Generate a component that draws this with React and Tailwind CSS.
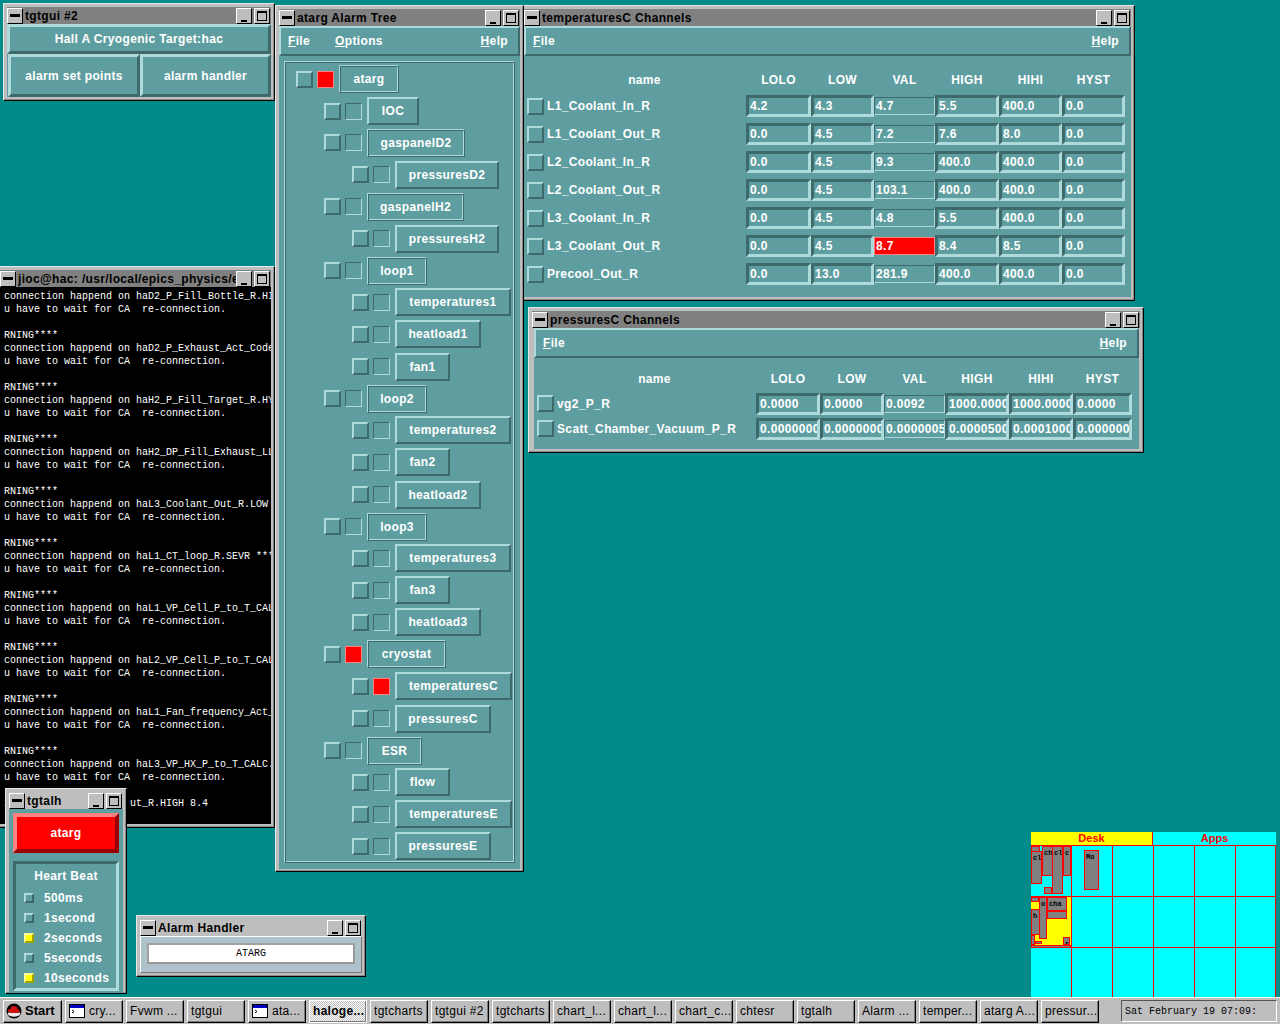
import React from 'react';

const raised = 'border-2 border-t-[#afdadc] border-l-[#afdadc] border-r-[#3f6a6b] border-b-[#3f6a6b]';
const sunken = 'border-[3px] border-t-[#3f6a6b] border-l-[#3f6a6b] border-r-[#afdadc] border-b-[#afdadc]';
const thin = 'border border-t-[#3f6a6b] border-l-[#3f6a6b] border-r-[#afdadc] border-b-[#afdadc]';
const etched = 'border border-t-[#afdadc] border-l-[#afdadc] border-r-[#3f6a6b] border-b-[#3f6a6b] shadow-[inset_1px_1px_0_#3f6a6b,inset_-1px_-1px_0_#afdadc]';
const sans = "font-['Liberation_Sans',sans-serif]";
const mono = "font-['Liberation_Mono',monospace]";
const label = `${sans} text-[12px] font-bold text-white tracking-[0.35px] whitespace-nowrap`;

const TitleBtn = ({ children }) => (
  <div className="w-[16px] h-[16px] bg-[#bebebe] border border-t-white border-l-white border-r-black border-b-black flex items-center justify-center shrink-0 relative">
    {children}
  </div>
);

const Window = ({ pos, title, titleBg = 'bg-[#808080]', children }) => (
  <div className={`absolute ${pos} bg-[#bebebe] border border-t-[#e8e8e8] border-l-[#e8e8e8] border-r-black border-b-black shadow-[inset_-1px_-1px_0_#8a8a8a] p-[3px] flex flex-col overflow-hidden`}>
    <div className={`h-[17px] ${titleBg} flex items-center shrink-0 pr-[1px]`}>
      <TitleBtn><div className="w-[10px] h-[3px] bg-black" /></TitleBtn>
      <span className={`${sans} text-[12px] font-bold text-black tracking-[0.35px] ml-[2px] flex-1 whitespace-nowrap overflow-hidden`}>{title}</span>
      <div className="flex gap-[2px]">
        <TitleBtn><div className="absolute left-[4px] bottom-[1px] w-[6px] h-[2px] bg-black" /></TitleBtn>
        <TitleBtn><div className="w-[10px] h-[10px] border border-black border-t-2" /></TitleBtn>
      </div>
    </div>
    {children}
  </div>
);

const MenuBar = ({ left, help = true, className = '' }) => (
  <div className={`h-[30px] shrink-0 ${raised} flex items-center px-[7px] gap-[25px] ${label} ${className}`}>
    {left.map((m) => (
      <span key={m}>
        <span className="underline">{m[0]}</span>{m.slice(1)}
      </span>
    ))}
    {help && (
      <span className="ml-auto mr-[3px]"><span className="underline">H</span>elp</span>
    )}
  </div>
);

const GuiBtn = ({ className, children }) => (
  <div className={`${className} border-[3px] border-t-[#afdadc] border-l-[#afdadc] border-r-[#3f6a6b] border-b-[#3f6a6b] flex items-center justify-center ${label}`}>
    {children}
  </div>
);

const treeRows = [
  { level: 'pl-[10px]', name: 'atarg', w: 'w-[60px]', parent: true, alarm: true, h: 'h-[32px]' },
  { level: 'pl-[38px]', name: 'IOC', w: 'w-[52px]', h: 'h-[32px]' },
  { level: 'pl-[38px]', name: 'gaspanelD2', w: 'w-[98px]', parent: true, h: 'h-[31px]' },
  { level: 'pl-[66px]', name: 'pressuresD2', w: 'w-[104px]', h: 'h-[33px]' },
  { level: 'pl-[38px]', name: 'gaspanelH2', w: 'w-[97px]', parent: true, h: 'h-[31px]' },
  { level: 'pl-[66px]', name: 'pressuresH2', w: 'w-[104px]', h: 'h-[33px]' },
  { level: 'pl-[38px]', name: 'loop1', w: 'w-[60px]', parent: true, h: 'h-[31px]' },
  { level: 'pl-[66px]', name: 'temperatures1', w: 'w-[116px]', h: 'h-[32px]' },
  { level: 'pl-[66px]', name: 'heatload1', w: 'w-[86px]', h: 'h-[32px]' },
  { level: 'pl-[66px]', name: 'fan1', w: 'w-[55px]', h: 'h-[33px]' },
  { level: 'pl-[38px]', name: 'loop2', w: 'w-[60px]', parent: true, h: 'h-[31px]' },
  { level: 'pl-[66px]', name: 'temperatures2', w: 'w-[116px]', h: 'h-[32px]' },
  { level: 'pl-[66px]', name: 'fan2', w: 'w-[55px]', h: 'h-[32px]' },
  { level: 'pl-[66px]', name: 'heatload2', w: 'w-[86px]', h: 'h-[33px]' },
  { level: 'pl-[38px]', name: 'loop3', w: 'w-[60px]', parent: true, h: 'h-[31px]' },
  { level: 'pl-[66px]', name: 'temperatures3', w: 'w-[116px]', h: 'h-[32px]' },
  { level: 'pl-[66px]', name: 'fan3', w: 'w-[55px]', h: 'h-[32px]' },
  { level: 'pl-[66px]', name: 'heatload3', w: 'w-[86px]', h: 'h-[32px]' },
  { level: 'pl-[38px]', name: 'cryostat', w: 'w-[79px]', parent: true, alarm: true, h: 'h-[32px]' },
  { level: 'pl-[66px]', name: 'temperaturesC', w: 'w-[117px]', alarm: true, h: 'h-[32px]' },
  { level: 'pl-[66px]', name: 'pressuresC', w: 'w-[96px]', h: 'h-[33px]' },
  { level: 'pl-[38px]', name: 'ESR', w: 'w-[55px]', parent: true, h: 'h-[31px]' },
  { level: 'pl-[66px]', name: 'flow', w: 'w-[55px]', h: 'h-[32px]' },
  { level: 'pl-[66px]', name: 'temperaturesE', w: 'w-[117px]', h: 'h-[32px]' },
  { level: 'pl-[66px]', name: 'pressuresE', w: 'w-[96px]', h: 'h-[32px]' },
];

const Check = () => <div className={`w-[17px] h-[17px] shrink-0 ${raised}`} />;

const TreeRow = ({ row }) => (
  <div className={`flex items-center ${row.h} ${row.level}`}>
    <Check />
    <div className={`w-[17px] h-[17px] ml-[4px] shrink-0 ${row.alarm ? 'bg-[#ff0000] border border-t-[#ff8080] border-l-[#ff8080] border-r-[#ff8080] border-b-[#ff8080]' : thin}`} />
    <div className={`${row.w} h-[28px] ml-[5px] shrink-0 flex items-center justify-center ${label} ${row.parent ? etched : raised}`}>
      {row.name}
    </div>
  </div>
);

const Field = ({ children }) => (
  <div className={`h-[22px] ${sunken} overflow-hidden flex items-center pl-[1px] ${label} tracking-[0.5px] leading-none`}>
    {children}
  </div>
);

const ValField = ({ alarm, children }) => (
  <div className={`h-[18px] overflow-hidden flex items-center pl-[1px] ${label} tracking-[0.5px] ${alarm ? 'bg-[#ff0000] border border-[#ff8080]' : thin}`}>
    {children}
  </div>
);

const heads = ['LOLO', 'LOW', 'VAL', 'HIGH', 'HIHI', 'HYST'];

const tempRows = [
  ['L1_Coolant_In_R', '4.2', '4.3', '4.7', '5.5', '400.0', '0.0'],
  ['L1_Coolant_Out_R', '0.0', '4.5', '7.2', '7.6', '8.0', '0.0'],
  ['L2_Coolant_In_R', '0.0', '4.5', '9.3', '400.0', '400.0', '0.0'],
  ['L2_Coolant_Out_R', '0.0', '4.5', '103.1', '400.0', '400.0', '0.0'],
  ['L3_Coolant_In_R', '0.0', '4.5', '4.8', '5.5', '400.0', '0.0'],
  ['L3_Coolant_Out_R', '0.0', '4.5', '8.7', '8.4', '8.5', '0.0'],
  ['Precool_Out_R', '0.0', '13.0', '281.9', '400.0', '400.0', '0.0'],
];

const pressRows = [
  ['vg2_P_R', '0.0000', '0.0000', '0.0092', '1000.0000', '1000.0000', '0.0000'],
  ['Scatt_Chamber_Vacuum_P_R', '0.0000000', '0.0000000', '0.0000005', '0.0000500', '0.0001000', '0.000000'],
];

const ChannelRow = ({ row, cols, h, gap }) => (
  <div className={`grid ${cols} items-center ${h}`}>
    <div className={`flex items-center ${gap}`}>
      <Check />
      <span className={label}>{row[0]}</span>
    </div>
    {row.slice(1).map((v, i) =>
      i === 2 ? (
        <ValField key={i} alarm={v === '8.7'}>{v}</ValField>
      ) : (
        <Field key={i}>{v}</Field>
      )
    )}
  </div>
);

const termMsgs = [
  'haD2_P_Fill_Bottle_R.HIH',
  'haD2_P_Exhaust_Act_Code.',
  'haH2_P_Fill_Target_R.HYS',
  'haH2_DP_Fill_Exhaust_LL_',
  'haL3_Coolant_Out_R.LOW *',
  'haL1_CT_loop_R.SEVR ****',
  'haL1_VP_Cell_P_to_T_CALC',
  'haL2_VP_Cell_P_to_T_CALC',
  'haL1_Fan_frequency_Act_C',
  'haL3_VP_HX_P_to_T_CALC.H',
];

const Beat = ({ on, children }) => (
  <div className="flex items-center h-[20px] pl-[8px]">
    <div className={`w-[10px] h-[10px] border-2 border-t-[#afdadc] border-l-[#afdadc] border-r-[#3f6a6b] border-b-[#3f6a6b] ${on ? 'bg-[#ffff00] border-t-[#ffff99] border-l-[#ffff99] border-r-[#a0a000] border-b-[#a0a000]' : 'bg-[#5f9ea0]'}`} />
    <span className={`${label} ml-[10px]`}>{children}</span>
  </div>
);

// pager thumbnails, their place on the mini desktop is the content
const miniWins = [
  ['left-[0px] top-[14px] w-[9px] h-[6px]', ''],
  ['left-[0px] top-[19px] w-[11px] h-[33px]', 'cl'],
  ['left-[11px] top-[14px] w-[11px] h-[30px]', 'ch'],
  ['left-[21px] top-[14px] w-[11px] h-[48px]', 'cl'],
  ['left-[32px] top-[14px] w-[8px] h-[30px]', 'cl'],
  ['left-[13px] top-[55px] w-[8px] h-[7px]', ''],
  ['left-[53px] top-[18px] w-[15px] h-[40px]', 'Mo'],
  ['left-[0px] top-[65px] w-[8px] h-[5px]', ''],
  ['left-[0px] top-[77px] w-[9px] h-[26px]', 'h'],
  ['left-[8px] top-[65px] w-[8px] h-[42px]', 'o'],
  ['left-[16px] top-[65px] w-[20px] h-[14px]', 'cha'],
  ['left-[16px] top-[79px] w-[20px] h-[8px]', ''],
  ['left-[0px] top-[103px] w-[4px] h-[10px]', ''],
  ['left-[4px] top-[109px] w-[7px] h-[3px]', ''],
  ['left-[32px] top-[105px] w-[7px] h-[8px]', 'r'],
  ['left-[0px] top-[113px] w-[40px] h-[3px]', ''],
];

const TermIcon = () => (
  <svg width="16" height="14" viewBox="0 0 16 14" className="shrink-0">
    <rect x="0.5" y="0.5" width="15" height="13" fill="#fff" stroke="#000" />
    <rect x="1" y="1" width="14" height="3" fill="#0000c0" />
    <path d="M3 6l2 1.5L3 9" fill="none" stroke="#000" />
  </svg>
);

const HatIcon = () => (
  <svg width="16" height="16" viewBox="0 0 16 16" className="shrink-0">
    <circle cx="8" cy="8" r="7.5" fill="#000" />
    <path d="M1.5 11c2 3.500 11 3.500 13 0l-1-1.500h-11z" fill="#e8e8e8" />
    <path d="M2 8.500c-.5-2 1-1.500 2-2 1-3 2.500-4 4.500-3.500 2 .2 3.500 2.500 3.500 3.500 1.500.5 2.500 1 2 2.500-3 1.500-9 1.500-12-.5z" fill="#d01010" />
  </svg>
);

const TaskBtn = ({ icon, active, children }) => (
  <div className={`w-[58px] h-[23px] shrink-0 border border-t-white border-l-white border-r-black border-b-black shadow-[inset_-1px_-1px_0_#7a7a7a] flex items-center gap-[4px] px-[3px] ${sans} text-[12px] tracking-[0.3px] text-black whitespace-nowrap overflow-hidden ${active ? 'bg-[repeating-conic-gradient(#bebebe_0_25%,#ffffff_0_50%)] bg-[length:2px_2px] font-bold border-t-black border-l-black border-r-white border-b-white' : 'bg-[#bebebe]'}`}>
    {icon}
    <span>{children}</span>
  </div>
);

const tasks = ['tgtcharts', 'tgtgui #2', 'tgtcharts', 'chart_l...', 'chart_l...', 'chart_c...', 'chtesr', 'tgtalh', 'Alarm ...', 'temper...', 'atarg A...', 'pressur...'];

export default function App() {
  const tempCols = 'grid-cols-[219px_65px_63px_61px_64px_63px_63px]';
  const pressCols = 'grid-cols-[219px_64px_64px_61px_64px_64px_59px]';
  return (
    <div className="relative w-[1280px] h-[1024px] bg-[#008b8b] overflow-hidden">
      {/* terminal */}
      <Window pos="left-[-4px] top-[266px] w-[279px] h-[562px]" title="jioc@hac: /usr/local/epics_physics/epics_prod/">
        <div className={`flex-1 bg-black text-white ${mono} text-[10px] leading-[13px] whitespace-pre pl-[4px] pt-[3px] overflow-hidden`}>
          {termMsgs.map((m, i) => (
            <div key={m}>
              {i > 0 && <div>RNING****</div>}
              <div>{`connection happend on ${m}`}</div>
              <div>u have to wait for CA  re-connection.</div>
              <div>&nbsp;</div>
            </div>
          ))}
          <div>{'i                    ut_R.HIGH 8.4'}</div>
        </div>
      </Window>

      {/* tgtgui */}
      <Window pos="left-[3px] top-[3px] w-[272px] h-[98px]" title="tgtgui #2">
        <div className="flex-1 bg-[#5f9ea0] flex flex-col">
          <GuiBtn className="h-[30px] mx-0">Hall A Cryogenic Target:hac</GuiBtn>
          <div className="flex flex-1">
            <GuiBtn className="w-[132px] ml-[1px]">alarm set points</GuiBtn>
            <GuiBtn className="flex-1">alarm handler</GuiBtn>
          </div>
        </div>
      </Window>

      {/* temperaturesC */}
      <Window pos="left-[520px] top-[5px] w-[615px] h-[296px]" title="temperaturesC Channels">
        <div className="flex-1 bg-[#5f9ea0] flex flex-col">
          <MenuBar left={['File']} />
          <div className="pl-[3px] pt-[12px]">
            <div className={`grid ${tempCols} items-center h-[24px] ${label}`}>
              <span className="text-center pl-[16px]">name</span>
              {heads.map((h) => <span key={h} className="text-center">{h}</span>)}
            </div>
            {tempRows.map((r) => (
              <ChannelRow key={r[0]} row={r} cols={tempCols} h="h-[28px]" gap="gap-[3px]" />
            ))}
          </div>
        </div>
      </Window>

      {/* pressuresC */}
      <Window pos="left-[528px] top-[307px] w-[616px] h-[146px]" title="pressuresC Channels">
        <div className="flex-1 bg-[#5f9ea0] flex flex-col ml-[2px] mr-[1px]">
          <MenuBar left={['File']} />
          <div className="pl-[3px] pt-[9px]">
            <div className={`grid ${pressCols} items-center h-[24px] ${label}`}>
              <span className="text-center pl-[16px]">name</span>
              {heads.map((h) => <span key={h} className="text-center">{h}</span>)}
            </div>
            {pressRows.map((r) => (
              <ChannelRow key={r[0]} row={r} cols={pressCols} h="h-[25px]" gap="gap-[3px]" />
            ))}
          </div>
        </div>
      </Window>

      {/* alarm tree */}
      <Window pos="left-[275px] top-[5px] w-[249px] h-[867px]" title="atarg Alarm Tree">
        <div className="flex-1 bg-[#5f9ea0] flex flex-col pb-[6px]">
          <MenuBar left={['File', 'Options']} />
          <div className={`flex-1 mt-[5px] mx-[5px] ${etched} pt-[1px] pl-[1px]`}>
            {treeRows.map((r) => <TreeRow key={r.name} row={r} />)}
          </div>
        </div>
      </Window>

      {/* tgtalh */}
      <Window pos="left-[5px] top-[788px] w-[122px] h-[206px]" title="tgtalh" titleBg="bg-[#bebebe]">
        <div className="flex-1 bg-[#5f9ea0] flex flex-col p-[4px]">
          <div className={`h-[40px] bg-[#ff0000] border-[4px] border-t-[#ff8080] border-l-[#ff8080] border-r-[#9b0000] border-b-[#9b0000] flex items-center justify-center ${label}`}>
            atarg
          </div>
          <div className={`flex-1 mt-[8px] ${sunken} flex flex-col`}>
            <div className={`${label} text-center h-[24px] flex items-center justify-center`}>Heart Beat</div>
            <Beat>500ms</Beat>
            <Beat>1second</Beat>
            <Beat on>2seconds</Beat>
            <Beat>5seconds</Beat>
            <Beat on>10seconds</Beat>
          </div>
        </div>
      </Window>

      {/* alarm handler */}
      <Window pos="left-[136px] top-[915px] w-[230px] h-[62px]" title="Alarm Handler" titleBg="bg-[#bebebe]">
        <div className="flex-1 bg-[#aec2cc] border border-t-white border-l-white border-r-[#777] border-b-[#777] p-[6px]">
          <div className={`h-[21px] bg-white border-2 border-t-[#a0a0a0] border-l-[#a0a0a0] border-r-[#999] border-b-[#999] flex items-center justify-center ${mono} text-[10px] text-black`}>
            ATARG
          </div>
        </div>
      </Window>

      {/* pager */}
      <div className="absolute left-[1031px] top-[832px] w-[245px] h-[165px] bg-[#00ffff] overflow-hidden">
        <div className={`flex h-[14px] border-b border-[#ff0000] ${sans} text-[11px] font-bold text-[#ff0000] leading-[13px] text-center`}>
          <div className="w-[122px] bg-[#ffff00] border-r border-[#ff0000]">Desk</div>
          <div className="flex-1">Apps</div>
        </div>
        <div className="absolute left-0 top-[65px] w-[40px] h-[51px] bg-[#ffff00]" />
        <div className="grid grid-cols-[41px_41px_41px_41px_41px_1fr] grid-rows-[51px_51px_51px]">
          {Array.from({ length: 18 }).map((_, i) => (
            <div key={i} className="border-r border-b border-[#ff0000]" />
          ))}
        </div>
        {miniWins.map(([p, t], i) => (
          <div key={i} className={`absolute ${p} bg-[#808080] border border-[#ff0000] overflow-hidden ${mono} text-[7px] font-bold leading-[12px] text-black pl-[1px]`}>
            {t}
          </div>
        ))}
      </div>

      {/* taskbar */}
      <div className="absolute left-0 bottom-0 w-[1280px] h-[27px] bg-[#bebebe] border-t border-t-white flex items-center gap-[3px] pl-[3px]">
        <div className={`w-[59px] h-[23px] shrink-0 bg-[#bebebe] border border-t-white border-l-white border-r-black border-b-black shadow-[inset_-1px_-1px_0_#7a7a7a] flex items-center gap-[3px] pl-[2px] ${sans} text-[13px] font-bold text-black`}>
          <HatIcon />
          Start
        </div>
        <TaskBtn icon={<TermIcon />}>cry...</TaskBtn>
        <TaskBtn>Fvwm ...</TaskBtn>
        <TaskBtn>tgtgui</TaskBtn>
        <TaskBtn icon={<TermIcon />}>ata...</TaskBtn>
        <TaskBtn active>haloge...</TaskBtn>
        {tasks.map((t, i) => <TaskBtn key={i}>{t}</TaskBtn>)}
        <div className={`ml-[19px] w-[156px] h-[22px] shrink-0 border border-t-[#555] border-l-[#555] border-r-white border-b-white flex items-center pl-[3px] ${mono} text-[10px] text-black`}>
          Sat February 19 07:09:
        </div>
      </div>
    </div>
  );
}
